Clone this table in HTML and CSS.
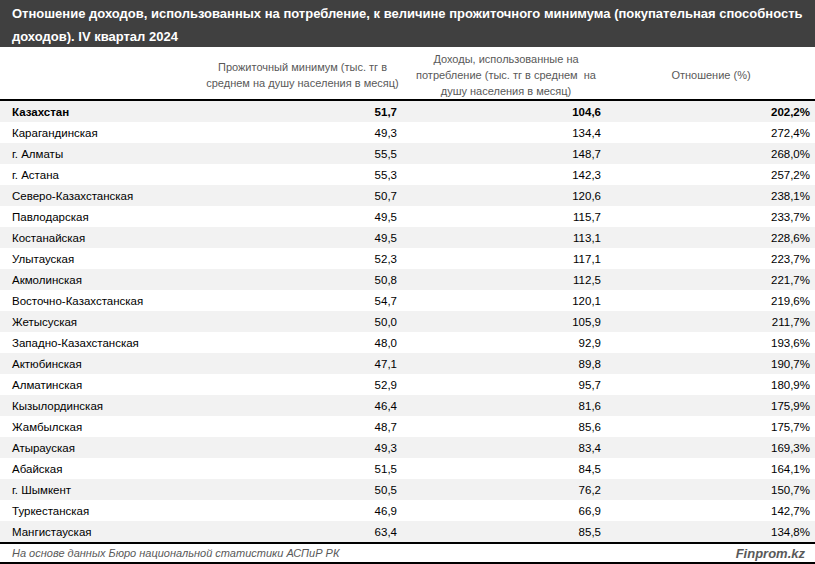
FILE: index.html
```html
<!DOCTYPE html>
<html lang="ru">
<head>
<meta charset="utf-8">
<link rel="stylesheet" href="styles.css">
</head>
<body>
<div class="page">
  <div class="title">Отношение доходов, использованных на потребление, к величине прожиточного минимума (покупательная способность доходов). IV квартал 2024</div>
  <div class="head">
    <div class="hc"></div>
    <div class="hc">Прожиточный минимум (тыс. тг в<br>среднем на душу населения в месяц)</div>
    <div class="hc">Доходы, использованные на<br>потребление (тыс. тг в среднем&nbsp; на<br>душу населения в месяц)</div>
    <div class="hc">Отношение (%)</div>
  </div>
  <div class="rows">
    <div class="row bold"><span>Казахстан</span><span>51,7</span><span>104,6</span><span>202,2%</span></div>
    <div class="row"><span>Карагандинская</span><span>49,3</span><span>134,4</span><span>272,4%</span></div>
    <div class="row"><span>г. Алматы</span><span>55,5</span><span>148,7</span><span>268,0%</span></div>
    <div class="row"><span>г. Астана</span><span>55,3</span><span>142,3</span><span>257,2%</span></div>
    <div class="row"><span>Северо-Казахстанская</span><span>50,7</span><span>120,6</span><span>238,1%</span></div>
    <div class="row"><span>Павлодарская</span><span>49,5</span><span>115,7</span><span>233,7%</span></div>
    <div class="row"><span>Костанайская</span><span>49,5</span><span>113,1</span><span>228,6%</span></div>
    <div class="row"><span>Улытауская</span><span>52,3</span><span>117,1</span><span>223,7%</span></div>
    <div class="row"><span>Акмолинская</span><span>50,8</span><span>112,5</span><span>221,7%</span></div>
    <div class="row"><span>Восточно-Казахстанская</span><span>54,7</span><span>120,1</span><span>219,6%</span></div>
    <div class="row"><span>Жетысуская</span><span>50,0</span><span>105,9</span><span>211,7%</span></div>
    <div class="row"><span>Западно-Казахстанская</span><span>48,0</span><span>92,9</span><span>193,6%</span></div>
    <div class="row"><span>Актюбинская</span><span>47,1</span><span>89,8</span><span>190,7%</span></div>
    <div class="row"><span>Алматинская</span><span>52,9</span><span>95,7</span><span>180,9%</span></div>
    <div class="row"><span>Кызылординская</span><span>46,4</span><span>81,6</span><span>175,9%</span></div>
    <div class="row"><span>Жамбылская</span><span>48,7</span><span>85,6</span><span>175,7%</span></div>
    <div class="row"><span>Атырауская</span><span>49,3</span><span>83,4</span><span>169,3%</span></div>
    <div class="row"><span>Абайская</span><span>51,5</span><span>84,5</span><span>164,1%</span></div>
    <div class="row"><span>г. Шымкент</span><span>50,5</span><span>76,2</span><span>150,7%</span></div>
    <div class="row"><span>Туркестанская</span><span>46,9</span><span>66,9</span><span>142,7%</span></div>
    <div class="row"><span>Мангистауская</span><span>63,4</span><span>85,5</span><span>134,8%</span></div>
  </div>
  <div class="foot">
    <span class="src">На основе данных Бюро национальной статистики АСПиР РК</span>
    <span class="brand">Finprom.kz</span>
  </div>
</div>
</body>
</html>
```

FILE: styles.css
```css
* { box-sizing: border-box; }
html, body { margin: 0; padding: 0; background: #fff; }
body { font-family: "Liberation Sans", Arial, sans-serif; color: #000; }
.page { width: 815px; height: 564px; display: flex; flex-direction: column; }
.title {
  background: #404040;
  color: #fff;
  font-weight: bold;
  font-size: 13px;
  line-height: 23px;
  padding: 2px 12px 0 12px;
  height: 47px;
  flex: none;
}
.head {
  display: grid;
  grid-template-columns: 200px 205px 202px 208px;
  height: 54px;
  padding-top: 4px;
  border-bottom: 2px solid #000;
  align-items: center;
  flex: none;
}
.hc {
  text-align: center;
  font-size: 11px;
  line-height: 16px;
  color: #595959;
}
.rows { display: flex; flex-direction: column; flex: none; }
.row {
  display: grid;
  grid-template-columns: 200px 205px 202px 208px;
  height: 21px;
  align-items: center;
  font-size: 11.5px;
}
.row:nth-child(odd) { background: #f2f2f2; }
.row span { text-align: right; padding-right: 6px; }
.row span:first-child { text-align: left; padding-left: 12px; }
.row span:nth-child(2) { padding-right: 8px; }
.row span:last-child { padding-right: 5px; }
.bold { font-weight: bold; }
.foot {
  border-top: 2px solid #000;
  border-bottom: 2px solid #000;
  height: 22px;
  flex: none;
  display: flex;
  justify-content: space-between;
  align-items: center;
  padding: 0 10px 0 12px;
}
.src { font-style: italic; font-size: 11px; color: #595959; }
.brand { font-style: italic; font-weight: bold; font-size: 13px; color: #595959; }
```
